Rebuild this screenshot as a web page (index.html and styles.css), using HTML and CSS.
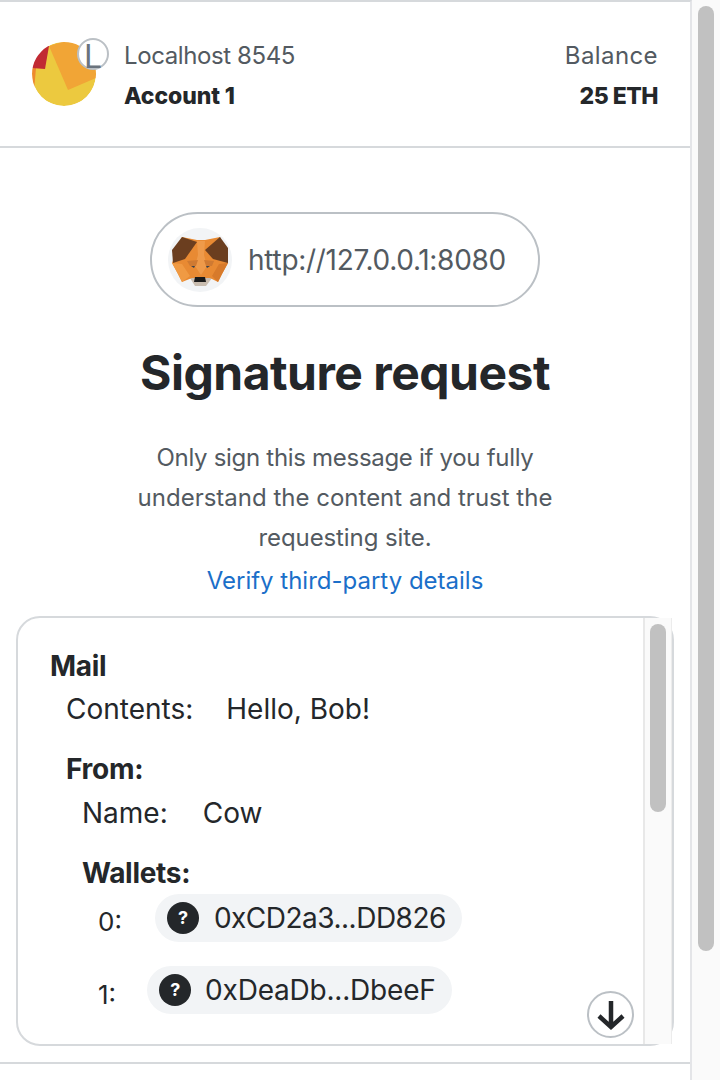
FILE: index.html
```html
<!DOCTYPE html>
<html lang="en">
<head>
    <meta charset="UTF-8">
    <meta name="viewport" content="width=device-width, initial-scale=1.0">
    <title>Signature request</title>
    <link rel="stylesheet" href="styles.css">
</head>
<body>
    <div class="window">
        <div class="app">
            <!-- Account header -->
            <header class="account-bar">
                <div class="account">
                    <div class="avatar">
                        <svg class="identicon" viewBox="0 0 64 64" width="64" height="64">
                            <circle cx="32" cy="32" r="32" fill="#ecc93f"/>
                            <polygon points="0,26 1,60 4,26" fill="#ee8a2f"/>
                            <polygon points="17,4 36,48 64,36 64,0 30,0" fill="#f1a536"/>
                            <polygon points="0,0 17,4 13,27 0,26" fill="#c12a33"/>
                            <path d="M0 0H64V64H0Z M32 0A32 32 0 1 0 32.01 0Z" fill="#fff" fill-rule="evenodd"/>
                        </svg>
                        <span class="network-badge">L</span>
                    </div>
                    <div class="account-text">
                        <div class="muted network-name">Localhost 8545</div>
                        <div class="strong account-name">Account 1</div>
                    </div>
                </div>
                <div class="balance">
                    <div class="muted balance-label">Balance</div>
                    <div class="strong balance-value">25 ETH</div>
                </div>
            </header>

            <!-- Site origin -->
            <div class="origin-wrap">
                <div class="origin-pill">
                    <svg class="fox" viewBox="0 0 64 64" width="64" height="64">
                        <circle cx="32" cy="32" r="32" fill="#f2f4f6"/>
                        <polygon points="22,50 44,50 38,58 27,58" fill="#c9bdb0"/>
                        <polygon points="14,9 29,12 37,12 52,9 60,35 54,46 50,54 42,50 24,50 14,54 10,46 4,35" fill="#e88a33"/>
                        <polygon points="29,13 37,13 36,27 39,38 33,47 27,38 30,27" fill="#ee9a4a"/>
                        <polygon points="19,33 30,32 28,38 22,38" fill="#cf7a32"/>
                        <polygon points="46,33 36,32 38,38 44,38" fill="#cf7a32"/>
                        <polygon points="4,35 14,36 22,48 14,54 10,46" fill="#f09a43"/>
                        <polygon points="60,35 51,36 44,48 50,54 54,46" fill="#d77a2b"/>
                        <polygon points="14,9 4,22 5,35 17,31 29,14" fill="#6b3e1f"/>
                        <polygon points="52,9 37,22 45,31 60,35 60,20" fill="#6b3e1f"/>
                        <polygon points="23,38 27,38 26,40" fill="#39414b"/>
                        <polygon points="42,38 38,38 39,40" fill="#39414b"/>
                        <polygon points="27,49 37,49 38,54 26,54" fill="#1a1a1a"/>
                    </svg>
                    <span class="origin-url">http://127.0.0.1:8080</span>
                </div>
            </div>

            <h1 class="title">Signature request</h1>
            <p class="description">
                <span class="line line-first">Only sign this message if you fully</span>
                <span class="line">understand the content and trust the</span>
                <span class="line line-last">requesting site.</span>
            </p>
            <a class="verify-link" href="#">Verify third-party details</a>

            <!-- Typed message -->
            <div class="message-box">
                <div class="message-body">
                    <div class="label mail-label">Mail</div>
                    <div class="node">
                        <div class="row"><span class="key">Contents:</span><span>Hello, Bob!</span></div>
                        <div class="label from-label">From:</div>
                        <div class="node">
                            <div class="row name-row"><span class="key">Name:</span><span>Cow</span></div>
                            <div class="label wallets-label">Wallets:</div>
                            <div class="node">
                                <div class="wallet-row wallet-first">
                                    <span class="wallet-index">0:</span>
                                    <span class="address-pill">
                                        <span class="question">?</span>0xCD2a3...DD826
                                    </span>
                                </div>
                                <div class="wallet-row wallet-second">
                                    <span class="wallet-index">1:</span>
                                    <span class="address-pill">
                                        <span class="question">?</span>0xDeaDb...DbeeF
                                    </span>
                                </div>
                            </div>
                        </div>
                    </div>
                </div>
                <div class="track inner-track"><div class="thumb inner-thumb"></div></div>
                <div class="scroll-down">
                    <svg viewBox="0 0 32 32" width="32" height="32">
                        <path d="M16 2V28M4 17L16 28L28 17" fill="none" stroke="#24272a" stroke-width="4.5"/>
                    </svg>
                </div>
            </div>

            <div class="footer-line"></div>
        </div>
        <div class="track page-track"><div class="thumb page-thumb"></div></div>
    </div>
</body>
</html>
```

FILE: styles.css
```css
html, body {
    margin: 0;
    height: 100%;
    overflow: hidden;
    background-color: #fff;
}

body {
    font-family: "Inter", "Open Sans", sans-serif;
    font-size: 24px;
    color: #24272a;
}

.window {
    display: flex;
    height: 1080px;
}

.app {
    width: 690px;
    border-top: 2px solid #d6d9dc;
    border-right: 2px solid #e4e5e8;
    flex-shrink: 0;
}

/* Account header */
.account-bar {
    display: flex;
    justify-content: space-between;
    align-items: center;
    height: 144px;
    padding: 0 32px;
    border-bottom: 2px solid #d6d9dc;
}

.account {
    display: flex;
    align-items: center;
    gap: 28px;
}

.avatar {
    position: relative;
    width: 64px;
    height: 64px;
}

.identicon {
    display: block;
}

.network-badge {
    position: absolute;
    top: -4px;
    left: 45px;
    width: 32px;
    height: 32px;
    box-sizing: border-box;
    border: 2px solid #bbc0c5;
    border-radius: 50%;
    background-color: #fff;
    color: #6a737d;
    font-size: 32px;
    line-height: 33px;
    text-align: center;
}

.account-text, .balance {
    display: flex;
    flex-direction: column;
    gap: 10px;
    padding-top: 4px;
    line-height: 30px;
}

.balance {
    text-align: right;
}

.muted {
    color: #535a61;
}

.strong {
    font-size: 23px;
    font-weight: 800;
}

.network-name {
    letter-spacing: -0.4px;
}

.balance-label {
    letter-spacing: 0.4px;
}

.account-name {
    letter-spacing: -0.1px;
}

.balance-value {
    letter-spacing: -0.5px;
}

/* Site origin */
.origin-wrap {
    display: flex;
    justify-content: center;
    padding-top: 64px;
}

.origin-pill {
    display: flex;
    align-items: center;
    gap: 16px;
    height: 91px;
    padding: 0 32px 0 16px;
    border: 2px solid #bbc0c5;
    border-radius: 48px;
}

.fox {
    display: block;
}

.origin-url {
    font-size: 28px;
    letter-spacing: -0.3px;
    color: #535a61;
}

.title {
    margin: 36px 0 0;
    font-size: 48px;
    font-weight: 700;
    letter-spacing: -0.5px;
    line-height: 60px;
    text-align: center;
}

.description {
    margin: 35px 0 0;
    line-height: 40px;
    color: #535a61;
    text-align: center;
}

.line {
    display: block;
}

.line-first {
    letter-spacing: -0.3px;
}

.line-last {
    letter-spacing: -0.1px;
}

.verify-link {
    display: block;
    margin-top: 7px;
    line-height: 32px;
    color: #1b6fc9;
    text-align: center;
    text-decoration: none;
}

/* Typed message */
.message-box {
    position: relative;
    display: flex;
    height: 426px;
    margin: 19px 16px 0;
    border: 2px solid #d6d9dc;
    border-radius: 24px;
}

.message-body {
    flex: 1;
    padding: 31px 0 0 32px;
    overflow: hidden;
    font-size: 28px;
    line-height: 34px;
}

.node {
    padding-left: 16px;
}

.label {
    font-weight: 700;
    letter-spacing: -0.3px;
}

.row {
    display: flex;
    gap: 33px;
}

.name-row {
    gap: 35px;
}

.mail-label {
    margin-bottom: 9px;
}

.from-label {
    margin-top: 26px;
    margin-bottom: 10px;
}

.wallets-label {
    margin-top: 26px;
}

.wallet-row {
    display: flex;
    align-items: center;
}

.wallet-first {
    gap: 33px;
    margin-top: 4px;
}

.wallet-first .address-pill {
    letter-spacing: -0.5px;
}

.wallet-second {
    gap: 31px;
    margin-top: 24px;
}

.wallet-second .address-pill {
    gap: 14px;
    letter-spacing: -0.2px;
}

.wallet-index {
    padding-top: 8px;
    font-size: 26px;
}

.wallet-second .wallet-index {
    padding-top: 10px;
}

.address-pill {
    display: flex;
    align-items: center;
    gap: 15px;
    height: 48px;
    padding: 0 16px 0 12px;
    border-radius: 24px;
    background-color: #f2f4f6;
}

.question {
    display: block;
    width: 32px;
    height: 32px;
    border-radius: 50%;
    background-color: #24272a;
    color: #fff;
    font-size: 18px;
    font-weight: 700;
    line-height: 32px;
    text-align: center;
}

.scroll-down {
    position: absolute;
    right: 38px;
    bottom: 6px;
    display: flex;
    align-items: center;
    justify-content: center;
    width: 47px;
    height: 47px;
    box-sizing: border-box;
    border: 2px solid #bbc0c5;
    border-radius: 50%;
    background-color: #fff;
}

.footer-line {
    height: 2px;
    margin-top: 16px;
    background-color: #d6d9dc;
}

/* Scrollbars */
.track {
    box-sizing: border-box;
    background-color: #fafafa;
}

.page-track {
    flex: 1;
    padding: 6px 6px 0 6px;
}

.inner-track {
    width: 29px;
    flex-shrink: 0;
    padding: 6px 6px 0 5px;
    border-left: 2px solid #e8e8e8;
    border-right: 1px solid #ececec;
}

.thumb {
    border-radius: 8px;
    background-color: #c1c1c1;
}

.page-thumb {
    height: 945px;
}

.inner-thumb {
    width: 16px;
    height: 188px;
}
```
